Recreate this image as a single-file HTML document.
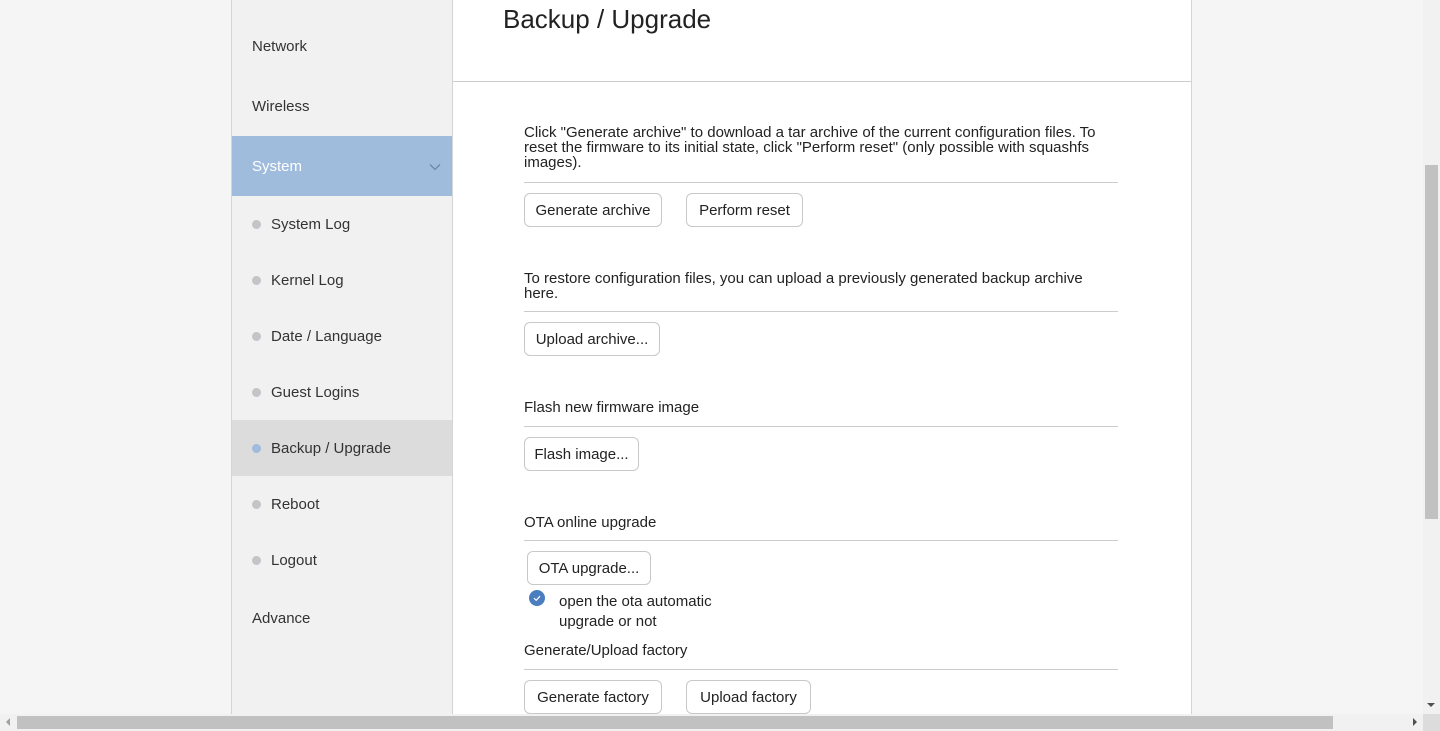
<!DOCTYPE html>
<html><head><style>
*{margin:0;padding:0;box-sizing:border-box}
body{width:1440px;height:731px;overflow:hidden;background:#f5f5f5;font-family:"Liberation Sans",sans-serif;font-size:14px;color:#222;position:relative}
.a{position:absolute}
#side{left:231px;top:0;width:222px;height:714px;background:#f1f1f1;border-left:1px solid #d4d4d4;border-right:1px solid #d4d4d4}
.it{position:absolute;left:20px;font-size:15px;color:#333}
.sub{position:absolute;left:0;width:220px;height:56px;line-height:58px;padding-left:39px;font-size:15px;color:#333}
.sub:before{content:"";position:absolute;left:20px;top:24px;width:9px;height:9px;border-radius:50%;background:#c4c4c8}
#main{left:453px;top:0;width:739px;height:714px;background:#fff;border-right:1px solid #d4d4d4}
.t{position:absolute;left:524px;width:594px;font-size:15px;line-height:15px;color:#222;margin-top:1px}
.hr{position:absolute;left:524px;width:594px;height:1px;background:#ccc}
.btn{position:absolute;height:34px;border:1px solid #c8c8c8;border-radius:6px;background:#fff;font-size:15px;line-height:33px;text-align:center;color:#222}
</style></head><body>
<div id="side" class="a">
<div class="it" style="top:38px">Network</div>
<div class="it" style="top:98px">Wireless</div>
<div class="a" style="left:0;top:136px;width:220px;height:60px;background:#9fbcdc;color:#fff;font-size:15px;line-height:61px;padding-left:20px">System
<svg class="a" style="left:197px;top:27px" width="12" height="8" viewBox="0 0 12 8"><path d="M1 1.5L6 6.5L11 1.5" fill="none" stroke="#6d87a8" stroke-width="1.3"/></svg></div>
<div class="sub" style="top:196px">System Log</div>
<div class="sub" style="top:252px">Kernel Log</div>
<div class="sub" style="top:308px">Date / Language</div>
<div class="sub" style="top:364px">Guest Logins</div>
<div class="sub" style="top:420px;background:#dcdcdc">Backup / Upgrade</div>
<div class="sub" style="top:476px">Reboot</div>
<div class="sub" style="top:532px">Logout</div>
<div class="it" style="top:610px">Advance</div>
</div>
<div class="a" style="left:252px;top:444px;width:9px;height:9px;border-radius:50%;background:#9fbcdc"></div>
<div id="main" class="a"></div>
<div class="a" style="left:503px;top:4px;font-size:26px;color:#222">Backup / Upgrade</div>
<div class="a" style="left:453px;top:81px;width:738px;height:1px;background:#ccc"></div>
<div class="t" style="top:124px">Click "Generate archive" to download a tar archive of the current configuration files. To reset the firmware to its initial state, click "Perform reset" (only possible with squashfs images).</div>
<div class="hr" style="top:182px"></div>
<div class="btn" style="left:524px;top:193px;width:138px">Generate archive</div>
<div class="btn" style="left:686px;top:193px;width:117px">Perform reset</div>
<div class="t" style="top:270px">To restore configuration files, you can upload a previously generated backup archive here.</div>
<div class="hr" style="top:311px"></div>
<div class="btn" style="left:524px;top:322px;width:136px">Upload archive...</div>
<div class="t" style="top:399px">Flash new firmware image</div>
<div class="hr" style="top:426px"></div>
<div class="btn" style="left:524px;top:437px;width:115px">Flash image...</div>
<div class="t" style="top:514px">OTA online upgrade</div>
<div class="hr" style="top:540px"></div>
<div class="btn" style="left:527px;top:551px;width:124px">OTA upgrade...</div>
<div class="a" style="left:529px;top:590px;width:16px;height:16px;border-radius:50%;background:#4a7ebf"><svg width="16" height="16"><path d="M5 8.2L7.2 10.3L11 6.2" fill="none" stroke="#fff" stroke-width="1.2"/></svg></div>
<div class="a" style="left:559px;top:592px;font-size:15px;line-height:20px">open the ota automatic<br>upgrade or not</div>
<div class="t" style="top:642px">Generate/Upload factory</div>
<div class="hr" style="top:669px"></div>
<div class="btn" style="left:524px;top:680px;width:138px">Generate factory</div>
<div class="btn" style="left:686px;top:680px;width:125px">Upload factory</div>
<div class="a" style="left:1423px;top:0;width:17px;height:714px;background:#f1f1f1"></div>
<div class="a" style="left:1425px;top:165px;width:13px;height:354px;background:#c1c1c1"></div>
<div class="a" style="left:1427px;top:703px;border-left:4px solid transparent;border-right:4px solid transparent;border-top:4px solid #505050"></div>
<div class="a" style="left:0;top:714px;width:1423px;height:17px;background:#f1f1f1"></div>
<div class="a" style="left:17px;top:716px;width:1316px;height:13px;background:#c1c1c1"></div>
<div class="a" style="left:6px;top:718px;border-top:4px solid transparent;border-bottom:4px solid transparent;border-right:4px solid #a0a0a0"></div>
<div class="a" style="left:1413px;top:718px;border-top:4px solid transparent;border-bottom:4px solid transparent;border-left:4px solid #505050"></div>
<div class="a" style="left:1423px;top:714px;width:17px;height:17px;background:#dcdcdc"></div>
</body></html>
